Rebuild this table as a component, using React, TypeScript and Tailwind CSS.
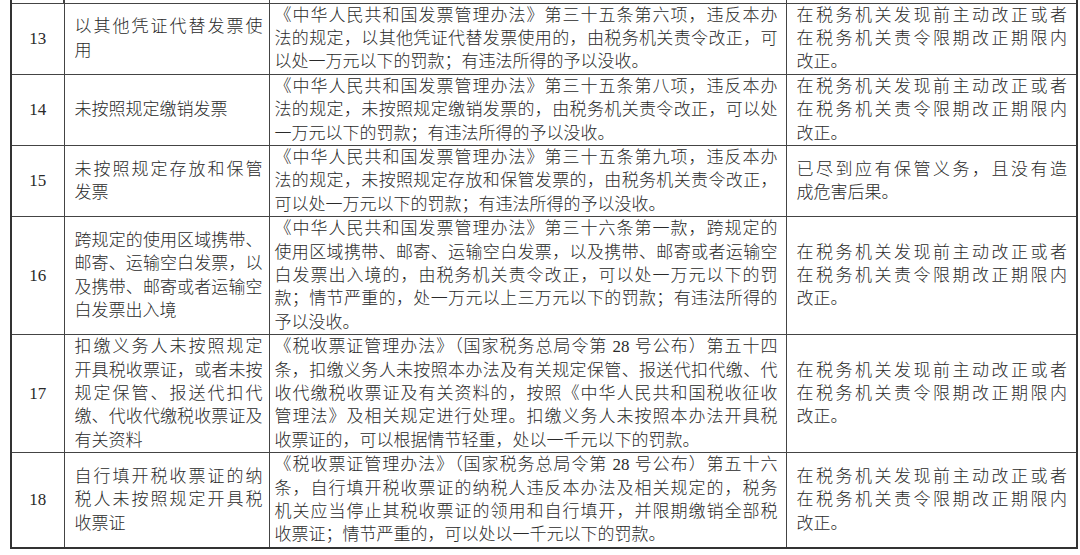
type Row = { no: string; item: string[]; basis: string[]; cond: string[] };

const rows: Row[] = [
  {
    no: "13",
    item: ["以其他凭证代替发票使", "用"],
    basis: [
      "《中华人民共和国发票管理办法》第三十五条第六项，违反本办",
      "法的规定，以其他凭证代替发票使用的，由税务机关责令改正，可",
      "以处一万元以下的罚款；有违法所得的予以没收。",
    ],
    cond: ["在税务机关发现前主动改正或者", "在税务机关责令限期改正期限内", "改正。"],
  },
  {
    no: "14",
    item: ["未按照规定缴销发票"],
    basis: [
      "《中华人民共和国发票管理办法》第三十五条第八项，违反本办",
      "法的规定，未按照规定缴销发票的，由税务机关责令改正，可以处",
      "一万元以下的罚款；有违法所得的予以没收。",
    ],
    cond: ["在税务机关发现前主动改正或者", "在税务机关责令限期改正期限内", "改正。"],
  },
  {
    no: "15",
    item: ["未按照规定存放和保管", "发票"],
    basis: [
      "《中华人民共和国发票管理办法》第三十五条第九项，违反本办",
      "法的规定，未按照规定存放和保管发票的，由税务机关责令改正，",
      "可以处一万元以下的罚款；有违法所得的予以没收。",
    ],
    cond: ["已尽到应有保管义务，且没有造", "成危害后果。"],
  },
  {
    no: "16",
    item: ["跨规定的使用区域携带、", "邮寄、运输空白发票，以", "及携带、邮寄或者运输空", "白发票出入境"],
    basis: [
      "《中华人民共和国发票管理办法》第三十六条第一款，跨规定的",
      "使用区域携带、邮寄、运输空白发票，以及携带、邮寄或者运输空",
      "白发票出入境的，由税务机关责令改正，可以处一万元以下的罚",
      "款；情节严重的，处一万元以上三万元以下的罚款；有违法所得的",
      "予以没收。",
    ],
    cond: ["在税务机关发现前主动改正或者", "在税务机关责令限期改正期限内", "改正。"],
  },
  {
    no: "17",
    item: ["扣缴义务人未按照规定", "开具税收票证，或者未按", "规定保管、报送代扣代", "缴、代收代缴税收票证及", "有关资料"],
    basis: [
      "《税收票证管理办法》（国家税务总局令第 28 号公布）第五十四",
      "条，扣缴义务人未按照本办法及有关规定保管、报送代扣代缴、代",
      "收代缴税收票证及有关资料的，按照《中华人民共和国税收征收",
      "管理法》及相关规定进行处理。扣缴义务人未按照本办法开具税",
      "收票证的，可以根据情节轻重，处以一千元以下的罚款。",
    ],
    cond: ["在税务机关发现前主动改正或者", "在税务机关责令限期改正期限内", "改正。"],
  },
  {
    no: "18",
    item: ["自行填开税收票证的纳", "税人未按照规定开具税", "收票证"],
    basis: [
      "《税收票证管理办法》（国家税务总局令第 28 号公布）第五十六",
      "条，自行填开税收票证的纳税人违反本办法及相关规定的，税务",
      "机关应当停止其税收票证的领用和自行填开，并限期缴销全部税",
      "收票证；情节严重的，可以处以一千元以下的罚款。",
    ],
    cond: ["在税务机关发现前主动改正或者", "在税务机关责令限期改正期限内", "改正。"],
  },
];

// each source line is its own block; all but the last are spread edge to edge
function Lines({ lines }: { lines: string[] }) {
  return (
    <>
      {lines.map((l, i) => (
        <div
          key={i}
          className={
            i < lines.length - 1
              ? "whitespace-nowrap text-justify [text-align-last:justify]"
              : "whitespace-nowrap text-left"
          }
        >
          {l}
        </div>
      ))}
    </>
  );
}

export default function App() {
  return (
    <main
      className="w-[1080px] h-[555px] bg-white overflow-hidden text-[17px] leading-[23.4px] text-[#2a2a2a]"
      style={{ fontFamily: '"Liberation Serif", "Noto Sans CJK SC", serif' }}
    >
      <table className="ml-[10px] w-[1066px] table-fixed border-collapse">
        <colgroup>
          <col className="w-[53px]" />
          <col className="w-[205px]" />
          <col className="w-[517px]" />
          <col className="w-[291px]" />
        </colgroup>
        <tbody>
          <tr className="h-[3px]">
            <td className="border-x-2 border-l-[#333] border-r-[#444] p-0" />
            <td className="border-r border-[#444] p-0" />
            <td className="border-r border-[#444] p-0" />
            <td className="border-r-2 border-[#333] p-0" />
          </tr>
          {rows.map((r) => (
            <tr key={r.no}>
              <td className="border border-[#444] border-l-2 border-l-[#333] text-center align-middle py-0">
                {r.no}
              </td>
              <td className="border border-[#444] align-middle pl-[10px] pr-[6px] py-0 font-light">
                <Lines lines={r.item} />
              </td>
              <td className="border border-[#444] align-middle pl-[5px] pr-[8px] py-0 font-light">
                <Lines lines={r.basis} />
              </td>
              <td className="border border-[#444] border-r-2 border-r-[#333] align-middle pl-[10px] pr-[9px] py-0 font-light">
                <Lines lines={r.cond} />
              </td>
            </tr>
          ))}
          <tr>
            <td className="border-t-2 border-[#333] p-0" colSpan={4} />
          </tr>
        </tbody>
      </table>
    </main>
  );
}
